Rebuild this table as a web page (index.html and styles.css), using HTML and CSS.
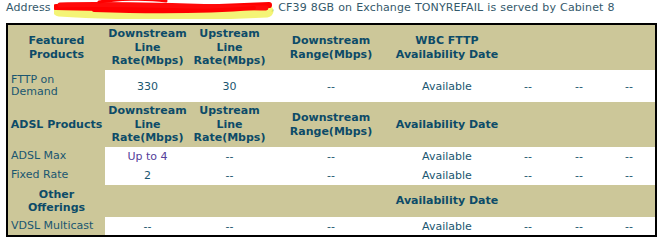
FILE: index.html
```html
<!DOCTYPE html>
<html>
<head>
<meta charset="utf-8">
<link rel="stylesheet" href="styles.css">
</head>
<body>
<div class="address">Address <span class="redact"><svg class="scribble" width="222" height="20" viewBox="0 0 222 20"><path d="M5,11 C50,14 140,16 213,12" stroke="#f2f25e" stroke-width="13" fill="none" stroke-linecap="round" opacity="0.85"/><path d="M2,8 C50,9 120,11 215,6" stroke="#ff0000" stroke-width="6" fill="none" stroke-linecap="round"/><path d="M6,6 C70,4 150,8 212,9" stroke="#ff0a0a" stroke-width="5" fill="none" stroke-linecap="round"/><path d="M45,3 C62,0 92,-1 112,2" stroke="#ff0000" stroke-width="3" fill="none" stroke-linecap="round"/><path d="M40,11 C100,13 150,13 200,9" stroke="#ff0000" stroke-width="4" fill="none" stroke-linecap="round"/></svg></span>, CF39 8GB on Exchange TONYREFAIL is served by Cabinet 8</div>
<table class="products">
<colgroup>
<col class="c1"><col class="c2"><col class="c3"><col class="c4"><col class="c5"><col class="c6"><col class="c7"><col class="c8">
</colgroup>
<tr class="head3">
<th>Featured<br>Products</th>
<th>Downstream<br>Line<br>Rate(Mbps)</th>
<th>Upstream<br>Line<br>Rate(Mbps)</th>
<th>Downstream<br>Range(Mbps)</th>
<th>WBC FTTP<br>Availability Date</th>
<th></th><th></th><th></th>
</tr>
<tr class="row2">
<td class="label">FTTP on<br>Demand</td>
<td>330</td><td>30</td><td>--</td><td>Available</td><td>--</td><td>--</td><td>--</td>
</tr>
<tr class="head3">
<th class="nowrap">ADSL Products</th>
<th>Downstream<br>Line<br>Rate(Mbps)</th>
<th>Upstream<br>Line<br>Rate(Mbps)</th>
<th>Downstream<br>Range(Mbps)</th>
<th>Availability Date</th>
<th></th><th></th><th></th>
</tr>
<tr class="row1">
<td class="label">ADSL Max</td>
<td><span class="visited">Up to 4</span></td><td>--</td><td>--</td><td>Available</td><td>--</td><td>--</td><td>--</td>
</tr>
<tr class="row1">
<td class="label">Fixed Rate</td>
<td>2</td><td>--</td><td>--</td><td>Available</td><td>--</td><td>--</td><td>--</td>
</tr>
<tr class="head2">
<th>Other<br>Offerings</th>
<th></th><th></th><th></th>
<th>Availability Date</th>
<th></th><th></th><th></th>
</tr>
<tr class="rowlast">
<td class="label nowrap">VDSL Multicast</td>
<td>--</td><td>--</td><td>--</td><td>Available</td><td>--</td><td>--</td><td>--</td>
</tr>
</table>
</body>
</html>
```
FILE: styles.css
```css
html, body {
  margin: 0;
  padding: 0;
  background: #ffffff;
}
body {
  padding: 1px 0 0 6px;
  font-family: "DejaVu Sans", Verdana, sans-serif;
  font-size: 11px;
  line-height: 13px;
}
.address {
  color: #34596b;
  white-space: nowrap;
  height: 13px;
  word-spacing: 0.4px;
  letter-spacing: 0.12px;
}
.redact {
  position: relative;
  display: inline-block;
  width: 216px;
  height: 12px;
  vertical-align: top;
}
.scribble {
  position: absolute;
  left: -1px;
  top: -2px;
}
.products {
  margin-top: 9px;
  border: 2px solid #000;
  border-collapse: separate;
  border-spacing: 0;
  table-layout: fixed;
  width: 651px;
  box-sizing: border-box;
}
.c1 { width: 97px; }
.c2 { width: 85px; }
.c3 { width: 79px; }
.c4 { width: 124px; }
.c5 { width: 108px; }
.c6 { width: 54px; }
.c7 { width: 48px; }
.c8 { width: 52px; }
.products th {
  background: #ccc799;
  color: #0d4b68;
  font-weight: bold;
  text-align: center;
  vertical-align: middle;
  padding: 0 1px;
  line-height: 13.5px;
}
.products td {
  background: #ffffff;
  color: #1a5670;
  text-align: center;
  vertical-align: middle;
  padding: 0;
  line-height: 13px;
}
.products td.label {
  background: #ccc799;
  text-align: left;
  padding-left: 3px;
  line-height: 12.5px;
}
.nowrap { white-space: nowrap; }
.visited { color: #55409a; }
.head3 { height: 45px; }
.row2 { height: 32px; }
.row1 { height: 19px; }
.head2 { height: 32px; }
.rowlast { height: 18px; }
```
